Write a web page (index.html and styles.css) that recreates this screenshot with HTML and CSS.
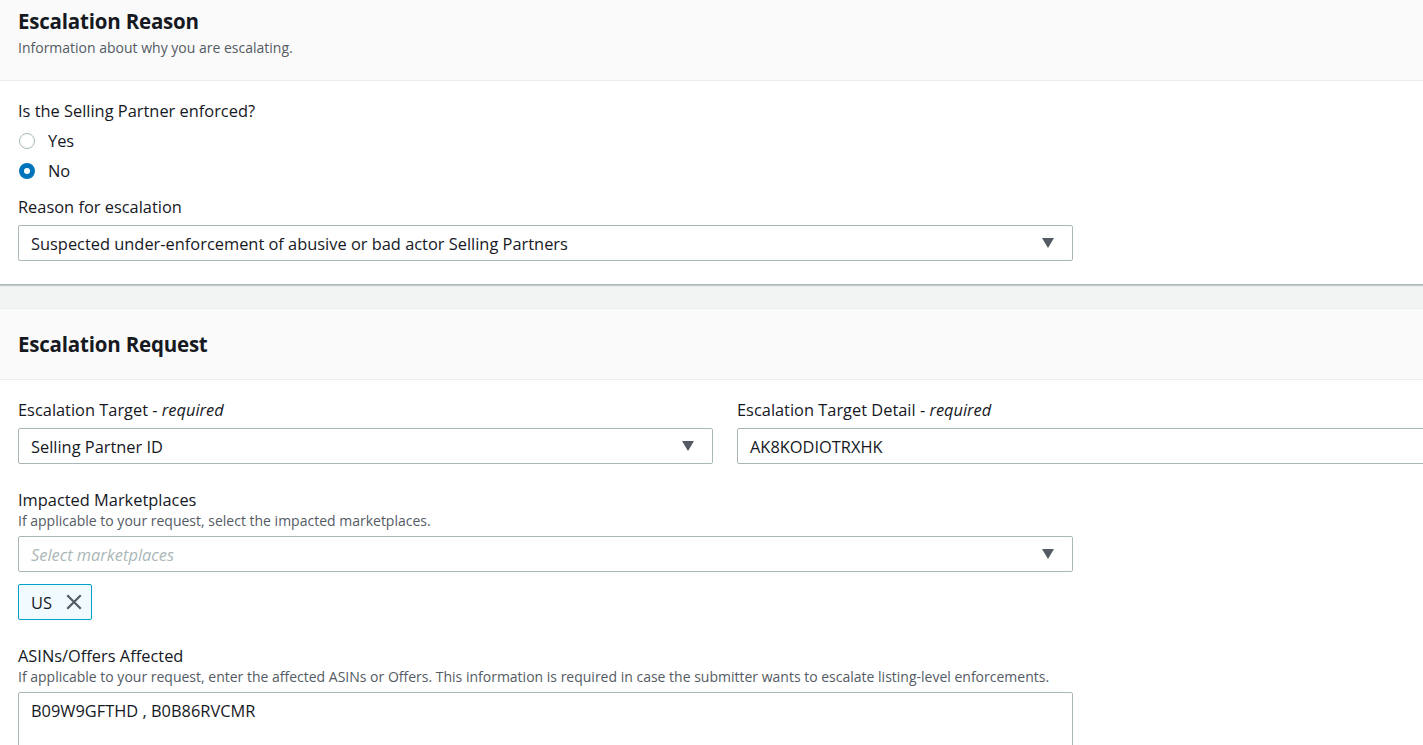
FILE: index.html
```html
<!DOCTYPE html>
<html>
<head>
<meta charset="utf-8">
<link rel="stylesheet" href="styles.css">
</head>
<body>
<div class="page">
  <section class="container first">
    <div class="header">
      <h2 class="title">Escalation Reason</h2>
      <div class="subtitle">Information about why you are escalating.</div>
    </div>
    <div class="content">
      <div class="field">
        <div class="label">Is the Selling Partner enforced?</div>
        <div class="radios">
          <div class="radio"><span class="circle"></span><span>Yes</span></div>
          <div class="radio"><span class="circle checked"></span><span>No</span></div>
        </div>
      </div>
      <div class="field">
        <div class="label">Reason for escalation</div>
        <div class="select wide">
          <span>Suspected under-enforcement of abusive or bad actor Selling Partners</span>
          <span class="caret"></span>
        </div>
      </div>
    </div>
  </section>

  <section class="container second">
    <div class="header">
      <h2 class="title">Escalation Request</h2>
    </div>
    <div class="content">
      <div class="row">
        <div class="field">
          <div class="label">Escalation Target - <i>required</i></div>
          <div class="select">
            <span>Selling Partner ID</span>
            <span class="caret"></span>
          </div>
        </div>
        <div class="field">
          <div class="label">Escalation Target Detail - <i>required</i></div>
          <div class="input">AK8KODIOTRXHK</div>
        </div>
      </div>
      <div class="field">
        <div class="label">Impacted Marketplaces</div>
        <div class="desc">If applicable to your request, select the impacted marketplaces.</div>
        <div class="select wide">
          <span class="placeholder">Select marketplaces</span>
          <span class="caret"></span>
        </div>
        <div class="tokens">
          <div class="token"><span>US</span>
            <svg width="18" height="18" viewBox="0 0 16 16"><path d="M2 2l12 12M14 2L2 14" stroke="#545b64" stroke-width="2" fill="none"/></svg>
          </div>
        </div>
      </div>
      <div class="field">
        <div class="label">ASINs/Offers Affected</div>
        <div class="desc">If applicable to your request, enter the affected ASINs or Offers. This information is required in case the submitter wants to escalate listing-level enforcements.</div>
        <div class="textarea wide">B09W9GFTHD , B0B86RVCMR</div>
      </div>
    </div>
  </section>
</div>
</body>
</html>
```
FILE: styles.css
```css
html, body {
  margin: 0;
  padding: 0;
}
body {
  background: #f2f3f3;
  overflow: hidden;
  font-family: "Open Sans", "Noto Sans", sans-serif;
  color: #16191f;
}
.page {
  width: 1450px;
}
.container {
  background: #fff;
}
.container.first {
  border-bottom: 1px solid #aab7b8;
  box-shadow: 0 1px 1px rgba(0,28,36,0.2);
}
.container.second {
  margin-top: 23px;
  border-top: 1px solid #eaeded;
}
.header {
  background: #fafafa;
  border-bottom: 1px solid #eaeded;
  padding: 8px 18px 0;
}
.first .header {
  height: 72px;
}
.second .header {
  height: 70px;
  padding-top: 0;
  display: flex;
  align-items: center;
}
.title {
  margin: 0;
  font-size: 20.5px;
  font-weight: 700;
  line-height: 26px;
  letter-spacing: -0.2px;
}
.subtitle {
  font-size: 14px;
  line-height: 20px;
  color: #545b64;
  margin-top: 4px;
}
.content {
  padding: 19px 18px 24px;
  display: flex;
  flex-direction: column;
  gap: 14px;
}
.first .content {
  padding-bottom: 23px;
}
.second .content {
  padding-top: 19px;
  gap: 25px;
}
.field {
  display: flex;
  flex-direction: column;
}
.label {
  font-size: 16.4px;
  line-height: 22px;
  margin-bottom: 7px;
}
.first .field:first-child .label {
  margin-bottom: 6px;
}
.label i {
  font-style: italic;
}
.desc {
  font-size: 14px;
  line-height: 20px;
  color: #545b64;
  margin-top: -7px;
  margin-bottom: 5px;
}
.radios {
  display: flex;
  flex-direction: column;
  gap: 8px;
  margin-top: 2px;
}
.radio {
  display: flex;
  align-items: center;
  gap: 13px;
  font-size: 16.4px;
  line-height: 22px;
}
.circle {
  border: 1px solid #aab7b8;
  border-radius: 50%;
  box-sizing: border-box;
  margin-left: 1px;
  width: 16px;
  height: 16px;
}
.circle.checked {
  border: 5px solid #0073bb;
}
.select, .input, .textarea {
  box-sizing: border-box;
  height: 36px;
  border: 1px solid #aab7b8;
  border-radius: 2px;
  display: flex;
  align-items: center;
  justify-content: space-between;
  padding: 0 18px 0 12px;
  font-size: 16.4px;
  background: #fff;
}
.wide {
  width: 1055px;
}
.caret {
  width: 0;
  height: 0;
  border-left: 6px solid transparent;
  border-right: 6px solid transparent;
  border-top: 10px solid #545b64;
}
.placeholder {
  color: #aab7b8;
  font-style: italic;
}
.row {
  display: grid;
  grid-template-columns: 695px 695px;
  gap: 24px;
}
.tokens {
  display: flex;
  margin-top: 12px;
}
.token {
  box-sizing: border-box;
  height: 36px;
  display: flex;
  align-items: center;
  gap: 13px;
  padding: 0 8px 0 12px;
  border: 1px solid #00a1c9;
  border-radius: 2px;
  background: #f1faff;
  font-size: 16.4px;
}
.textarea {
  height: 80px;
  align-items: flex-start;
  padding-top: 6px;
}
```
